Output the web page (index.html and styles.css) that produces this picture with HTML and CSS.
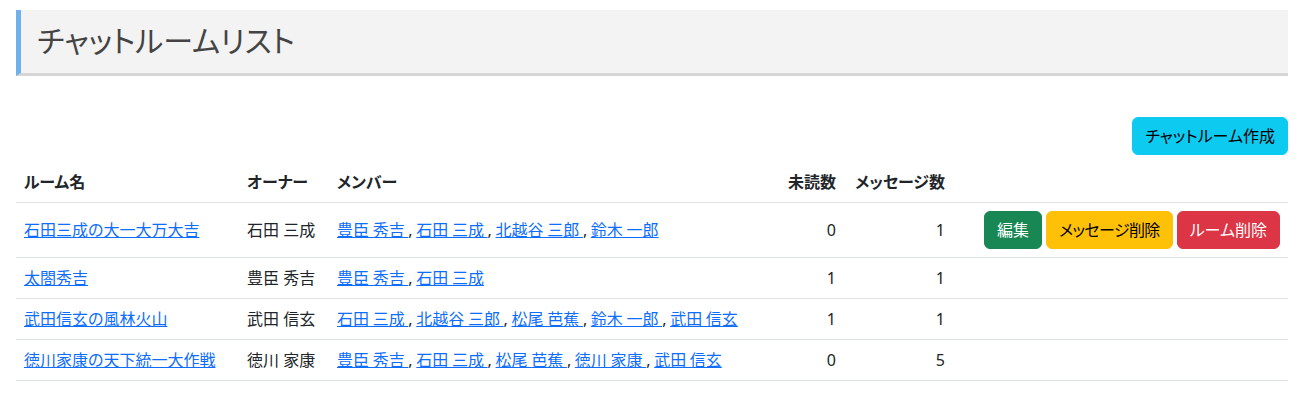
FILE: index.html
```html
<!DOCTYPE html>
<html lang="ja">
<head>
<meta charset="utf-8">
<title>チャットルームリスト</title>
<link rel="stylesheet" href="styles.css">
</head>
<body>
<div class="page">
  <h3 class="page-title">チャットルームリスト</h3>
  <div class="actions">
    <a class="btn btn-info" href="#">チャットルーム作成</a>
  </div>
  <table class="table">
    <colgroup>
      <col class="c-name"><col class="c-owner"><col class="c-members"><col class="c-unread"><col class="c-count"><col class="c-ops">
    </colgroup>
    <thead>
      <tr>
        <th>ルーム名</th>
        <th>オーナー</th>
        <th>メンバー</th>
        <th class="end">未読数</th>
        <th class="end">メッセージ数</th>
        <th></th>
      </tr>
    </thead>
    <tbody>
      <tr>
        <td><a href="#">石田三成の大一大万大吉</a></td>
        <td>石田 三成</td>
        <td class="members"><a href="#">豊臣 秀吉 </a>, <a href="#">石田 三成 </a>, <a href="#">北越谷 三郎 </a>, <a href="#">鈴木 一郎</a></td>
        <td class="end">0</td>
        <td class="end">1</td>
        <td>
          <div class="ops">
            <a class="btn btn-success" href="#">編集</a>
            <a class="btn btn-warning" href="#">メッセージ削除</a>
            <a class="btn btn-danger" href="#">ルーム削除</a>
          </div>
        </td>
      </tr>
      <tr>
        <td><a href="#">太閤秀吉</a></td>
        <td>豊臣 秀吉</td>
        <td class="members"><a href="#">豊臣 秀吉 </a>, <a href="#">石田 三成</a></td>
        <td class="end">1</td>
        <td class="end">1</td>
        <td></td>
      </tr>
      <tr>
        <td><a href="#">武田信玄の風林火山</a></td>
        <td>武田 信玄</td>
        <td class="members"><a href="#">石田 三成 </a>, <a href="#">北越谷 三郎 </a>, <a href="#">松尾 芭蕉 </a>, <a href="#">鈴木 一郎 </a>, <a href="#">武田 信玄</a></td>
        <td class="end">1</td>
        <td class="end">1</td>
        <td></td>
      </tr>
      <tr>
        <td><a href="#">徳川家康の天下統一大作戦</a></td>
        <td>徳川 家康</td>
        <td class="members"><a href="#">豊臣 秀吉 </a>, <a href="#">石田 三成 </a>, <a href="#">松尾 芭蕉 </a>, <a href="#">徳川 家康 </a>, <a href="#">武田 信玄</a></td>
        <td class="end">0</td>
        <td class="end">5</td>
        <td></td>
      </tr>
    </tbody>
  </table>
</div>
</body>
</html>
```
FILE: styles.css
```css
* { box-sizing: border-box; }
html, body { margin: 0; padding: 0; background: #fff; }
body {
  font-family: "Noto Sans", "Noto Sans CJK JP", sans-serif;
  font-size: 16px;
  line-height: 1.5;
  color: #212529;
  font-feature-settings: "palt";
}
.page {
  padding: 10px 28px 0 16px;
}
.page-title {
  margin: 0;
  padding: 13px 16px 14px 16px;
  font-size: 30px;
  font-weight: 400;
  line-height: 36px;
  color: #444;
  background: #f3f3f3;
  border-left: 5px solid #70b1ec;
  border-bottom: 3px solid #d6d6d6;
}
.actions {
  display: flex;
  justify-content: flex-end;
  margin-top: 41px;
  margin-bottom: 7px;
}
.btn {
  display: inline-block;
  padding: 6px 12px;
  font-size: 16px;
  line-height: 24px;
  border: 1px solid transparent;
  border-radius: 6px;
  text-decoration: none;
  white-space: nowrap;
}
.btn-info { background: #0dcaf0; border-color: #0dcaf0; color: #000; }
.btn-success { background: #198754; border-color: #198754; color: #fff; }
.btn-warning { background: #ffc107; border-color: #ffc107; color: #000; }
.btn-danger { background: #dc3545; border-color: #dc3545; color: #fff; }
.table {
  width: 100%;
  border-collapse: collapse;
  table-layout: fixed;
}
.c-name { width: 223px; }
.c-owner { width: 90px; }
.c-members { width: 447px; }
.c-unread { width: 68px; }
.c-count { width: 109px; }
.table th, .table td {
  padding: 8px;
  text-align: left;
  vertical-align: middle;
  border-bottom: 1px solid #dee2e6;
  white-space: nowrap;
}
.table th { font-weight: 700; }
.table th.end, .table td.end { text-align: right; }
.table td a { color: #0d6efd; text-decoration: underline; }
.table td.members { word-spacing: -0.5px; }
.table td .btn { text-decoration: none; }
.table td .btn-success, .table td .btn-danger { color: #fff; }
.table td .btn-warning { color: #000; }
.ops {
  display: flex;
  justify-content: flex-end;
  gap: 4px;
}
.ops .btn-warning { letter-spacing: -0.6px; }
```
